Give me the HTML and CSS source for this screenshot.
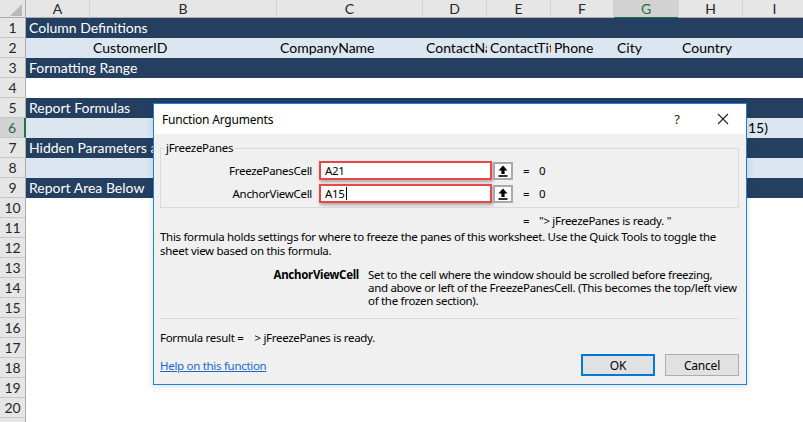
FILE: index.html
```html
<!DOCTYPE html>
<html lang="en">
<head>
<meta charset="utf-8">
<title>Function Arguments</title>
<link rel="stylesheet" href="styles.css">
</head>
<body>
<div class="app">
  <div class="sheet">
    <div class="row colhead">
      <div class="corner"><span class="tri"></span></div>
      <div class="ch">A</div>
      <div class="ch">B</div>
      <div class="ch">C</div>
      <div class="ch">D</div>
      <div class="ch">E</div>
      <div class="ch">F</div>
      <div class="ch sel">G</div>
      <div class="ch">H</div>
      <div class="ch">I</div>
    </div>
    <div class="row dark"><div class="rh">1</div><div class="cell span">Column Definitions</div></div>
    <div class="row light">
      <div class="rh">2</div>
      <div class="cell"></div>
      <div class="cell">CustomerID</div>
      <div class="cell">CompanyName</div>
      <div class="cell">ContactName</div>
      <div class="cell">ContactTitle</div>
      <div class="cell">Phone</div>
      <div class="cell">City</div>
      <div class="cell">Country</div>
      <div class="cell"></div>
    </div>
    <div class="row dark"><div class="rh">3</div><div class="cell span">Formatting Range</div></div>
    <div class="row"><div class="rh">4</div><div class="cell span"></div></div>
    <div class="row dark"><div class="rh">5</div><div class="cell span">Report Formulas</div></div>
    <div class="row light">
      <div class="rh selrow">6</div>
      <div class="cell"></div><div class="cell"></div><div class="cell"></div><div class="cell"></div>
      <div class="cell"></div><div class="cell"></div><div class="cell"></div><div class="cell"></div>
      <div class="cell tail">15)</div>
    </div>
    <div class="row dark"><div class="rh">7</div><div class="cell span">Hidden Parameters a</div></div>
    <div class="row light"><div class="rh">8</div><div class="cell span"></div></div>
    <div class="row dark"><div class="rh">9</div><div class="cell span">Report Area Below</div></div>
    <div class="row"><div class="rh">10</div><div class="cell span"></div></div>
    <div class="row"><div class="rh">11</div><div class="cell span"></div></div>
    <div class="row"><div class="rh">12</div><div class="cell span"></div></div>
    <div class="row"><div class="rh">13</div><div class="cell span"></div></div>
    <div class="row"><div class="rh">14</div><div class="cell span"></div></div>
    <div class="row"><div class="rh">15</div><div class="cell span"></div></div>
    <div class="row"><div class="rh">16</div><div class="cell span"></div></div>
    <div class="row"><div class="rh">17</div><div class="cell span"></div></div>
    <div class="row"><div class="rh">18</div><div class="cell span"></div></div>
    <div class="row"><div class="rh">19</div><div class="cell span"></div></div>
    <div class="row"><div class="rh">20</div><div class="cell span"></div></div>
    <div class="row"><div class="rh"></div><div class="cell span"></div></div>
  </div>

  <div class="dialog">
    <div class="titlebar">
      <span class="title">Function Arguments</span>
      <span class="qmark">?</span>
      <svg class="close" width="12" height="12" viewBox="0 0 12 12"><path d="M1 1 L11 11 M11 1 L1 11" stroke="#222" stroke-width="1.1" fill="none"/></svg>
    </div>
    <div class="dbody">
      <fieldset class="group">
        <legend>jFreezePanes</legend>
        <div class="argrow">
          <span class="arglabel">FreezePanesCell</span>
          <div class="input">A21</div>
          <div class="collapse"><svg width="10" height="12" viewBox="0 0 10 12"><path d="M5 0.5 L9.5 5.5 H6.6 V9 H3.4 V5.5 H0.5 Z" fill="#000"/><rect x="0.5" y="10.2" width="9" height="1.6" fill="#000"/></svg></div>
          <span class="eq">=</span>
          <span class="val">0</span>
        </div>
        <div class="argrow">
          <span class="arglabel">AnchorViewCell</span>
          <div class="input">A15<span class="caret"></span></div>
          <div class="collapse"><svg width="10" height="12" viewBox="0 0 10 12"><path d="M5 0.5 L9.5 5.5 H6.6 V9 H3.4 V5.5 H0.5 Z" fill="#000"/><rect x="0.5" y="10.2" width="9" height="1.6" fill="#000"/></svg></div>
          <span class="eq">=</span>
          <span class="val">0</span>
        </div>
      </fieldset>
      <div class="result"><span class="eq">=</span><span class="val">"&gt; jFreezePanes is ready. "</span></div>
      <p class="desc">This formula holds settings for where to freeze the panes of this worksheet. Use the Quick Tools to toggle the<br>sheet view based on this formula.</p>
      <div class="arghelp">
        <b class="ahname">AnchorViewCell</b>
        <p class="ahtext">Set to the cell where the window should be scrolled before freezing,<br>and above or left of the FreezePanesCell. (This becomes the top/left view<br>of the frozen section).</p>
      </div>
      <div class="sep"></div>
      <div class="fres">Formula result =<span class="fresval">&gt; jFreezePanes is ready.</span></div>
      <div class="foot">
        <a class="helplink">Help on this function</a>
        <div class="btns">
          <button class="btn ok">OK</button>
          <button class="btn">Cancel</button>
        </div>
      </div>
    </div>
  </div>
</div>
</body>
</html>
```

FILE: styles.css
```css
* { box-sizing: border-box; margin: 0; padding: 0; }
html, body { width: 803px; height: 422px; overflow: hidden; background: #fff; }
body { font-family: Lato, "Liberation Sans", sans-serif; }

.app { position: relative; width: 803px; height: 422px; overflow: hidden; }

/* ---------- sheet ---------- */
.sheet { width: 803px; overflow: hidden; }
.row {
  display: grid;
  grid-template-columns: 26px 64px 187px 146px 64px 64px 63px 65px 64px 64px;
  height: 20px;
  font-size: 14px;
  line-height: 19px;
}
.colhead { height: 18px; background: #e6e6e6; border-bottom: 1px solid #ababab; }
.corner { position: relative; border-right: 1px solid #ababab; }
.tri {
  position: absolute; right: 3px; bottom: 3px;
  width: 0; height: 0;
  border-left: 12px solid transparent;
  border-bottom: 12px solid #b9b9b9;
}
.ch {
  text-align: center; color: #262626; line-height: 17px; font-size: 14px;
  border-right: 1px solid #d2d2d2;
}
.ch.sel { background: #d2d2d2; color: #1f6e43; border-bottom: 2px solid #217346; }

.rh {
  background: #e6e6e6; color: #262626; text-align: center; font-size: 14px;
  border-right: 1px solid #ababab; border-bottom: 1px solid #c6c6c6;
  line-height: 19px;
}
.rh.selrow { background: #d2d2d2; color: #1f6e43; border-right: 2px solid #217346; }

.cell { padding-left: 3px; white-space: nowrap; overflow: hidden; }
.cell.span { grid-column: 2 / -1; }
.cell.tail { padding-left: 5px; }
.dark .cell { background: #243f60; color: #fff; }
.light .cell { background: #dce6f1; color: #000; }

/* ---------- dialog ---------- */
.dialog {
  position: absolute; left: 153px; top: 103px;
  width: 594px; height: 282px;
  border: 1px solid #1c7fd8;
  background: #f0f0f0;
  font-family: "Noto Sans", "Open Sans", sans-serif;
  font-size: 11.5px;
  color: #000;
  box-shadow: 0 2px 8px rgba(0,0,0,0.12);
  display: flex; flex-direction: column;
}
.titlebar {
  height: 30px; background: #fff;
  display: flex; align-items: center;
  padding-left: 8px;
}
.title { flex: 1; font-size: 12px; letter-spacing: -0.2px; }
.qmark { font-size: 13px; color: #222; margin-right: 37px; }
.close { margin-right: 17px; }

.dbody { flex: 1; padding: 6px 7px 8px 6px; display: flex; flex-direction: column; letter-spacing: -0.3px; }

.group {
  border: 1px solid #dadada;
  padding: 5px 0 4px 0;
  display: flex; flex-direction: column; gap: 4px;
}
.group legend { margin-left: 3px; padding: 0 2px; line-height: 16px; }
.argrow { display: flex; align-items: center; height: 19px; }
.arglabel { width: 151px; flex-shrink: 0; text-align: right; }
.input {
  margin-left: 7px; width: 173px; height: 19px; flex-shrink: 0;
  background: #fff; border: 2px solid #ec4548;
  box-shadow: 1px 2px 3px rgba(0,0,0,0.3);
  padding-left: 4px; line-height: 15px;
  display: flex; align-items: center;
}
.caret { display: inline-block; width: 1px; height: 13px; background: #000; margin-left: 1px; }
.collapse {
  margin-left: 1px; width: 20px; height: 18px; flex-shrink: 0;
  border: 2px solid #a9a9a9; background: #fff;
  display: flex; align-items: center; justify-content: center;
}
.argrow .eq { margin-left: 10px; width: 16px; }

.result { margin-top: 5px; padding-left: 363px; height: 16px; line-height: 16px; display: flex; }
.result .eq { width: 16px; }

.desc { margin-top: 1px; line-height: 14px; white-space: nowrap; }

.arghelp { margin-top: 10px; display: flex; line-height: 13px; }
.ahname { width: 199px; flex-shrink: 0; text-align: right; font-weight: 700; }
.ahtext { margin-left: 9px; white-space: nowrap; }

.sep { margin-top: 11px; height: 1px; background: #d9d9d9; }

.fres { margin-top: 11px; line-height: 16px; }
.fresval { margin-left: 11px; }

.foot { margin-top: auto; display: flex; align-items: center; justify-content: space-between; }
.helplink { color: #1a66cc; text-decoration: underline; line-height: 16px; margin-top: 2px; }
.btns { display: flex; gap: 10px; }
.btn {
  width: 74px; height: 22px;
  background: #e1e1e1; border: 1px solid #adadad;
  font-family: inherit; font-size: 12px; color: #000;
  letter-spacing: -0.2px;
}
.btn.ok { border: 2px solid #0078d7; }
```
